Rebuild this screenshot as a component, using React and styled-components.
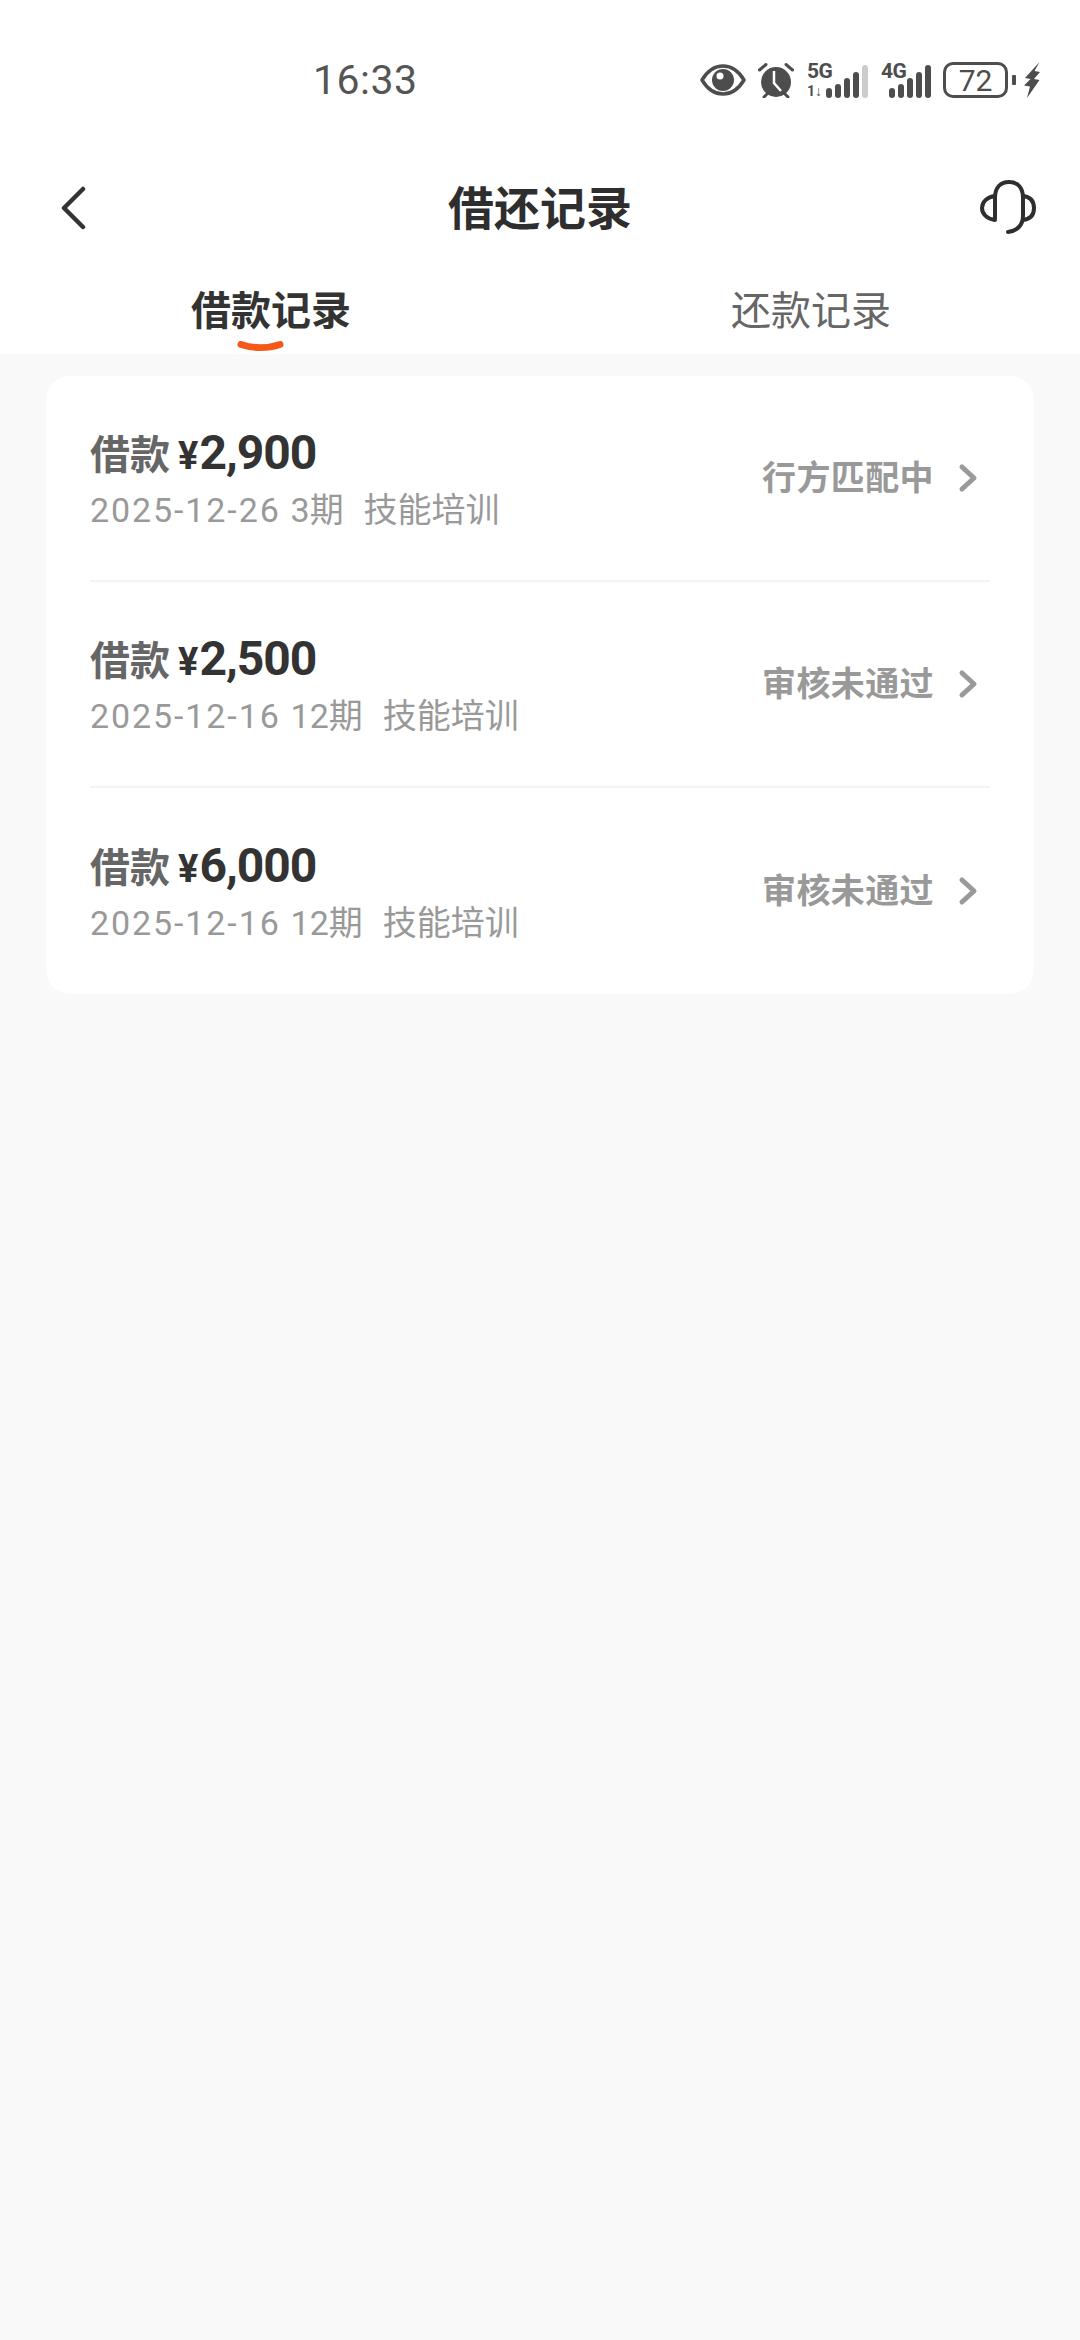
import React from 'react';
import styled, { createGlobalStyle } from 'styled-components';

const CJK = '"Noto Sans CJK SC", sans-serif';
const NUM = 'Roboto, "Noto Sans CJK SC", sans-serif';

const GlobalStyle = createGlobalStyle`
  html, body {
    margin: 0;
    padding: 0;
    background: #f9f9f9;
  }
  * {
    box-sizing: border-box;
  }
`;

const Page = styled.div`
  width: 1080px;
  height: 2340px;
  background: #f9f9f9;
  font-family: ${CJK};
`;

const Top = styled.header`
  background: #fff;
  height: 354px;
`;

const StatusBar = styled.div`
  height: 160px;
  display: flex;
  align-items: center;
  padding: 0 40px 0 313px;
  color: #4d4d4d;
`;

const Time = styled.span`
  font-family: Roboto, sans-serif;
  font-size: 41px;
  color: #555;
  letter-spacing: 0.5px;
`;

const StatusIcons = styled.div`
  margin-left: auto;
  display: flex;
  align-items: center;
`;

const Signal = styled.div`
  position: relative;
  width: ${p => p.$w}px;
  height: 36px;
  margin-left: ${p => p.$ml}px;
`;

const SignalText = styled.span`
  position: absolute;
  left: 0;
  top: -1px;
  font-family: Roboto, sans-serif;
  font-weight: 700;
  font-size: 21px;
  line-height: 21px;
  letter-spacing: -0.5px;
  color: #4d4d4d;
`;

const Arrows = styled.span`
  position: absolute;
  left: 0;
  bottom: 0;
  font-family: Roboto, sans-serif;
  font-weight: 700;
  font-size: 14px;
  line-height: 13px;
  color: #4d4d4d;
`;

const Bars = styled.div`
  position: absolute;
  right: 0;
  bottom: 0;
  display: flex;
  align-items: flex-end;
  gap: 3px;
`;

const Bar = styled.i`
  display: block;
  width: 6px;
  height: ${p => p.$h}px;
  border-radius: 3px;
  background: ${p => (p.$off ? '#ccc' : '#4d4d4d')};
`;

const Battery = styled.div`
  width: 65px;
  height: 36px;
  margin-left: 12px;
  border: 3px solid #4d4d4d;
  border-radius: 10px;
  display: flex;
  align-items: center;
  justify-content: center;
  font-family: Roboto, sans-serif;
  font-size: 30px;
  color: #4d4d4d;
`;

const BatteryNub = styled.i`
  display: block;
  width: 4px;
  height: 10px;
  margin-left: 4px;
  border-radius: 1px;
  background: #4d4d4d;
`;

const Nav = styled.div`
  height: 96px;
  display: grid;
  grid-template-columns: 1fr auto 1fr;
  align-items: center;
  padding: 0 44px;
`;

const NavEnd = styled.div`
  display: flex;
  justify-content: ${p => (p.$right ? 'flex-end' : 'flex-start')};
`;

const BackSvg = styled.svg`
  margin-left: 16px;
`;

const Title = styled.h1`
  margin: 0 0 6px;
  font-size: 46px;
  line-height: 64px;
  font-weight: 700;
  color: #2e2e2e;
`;

const Tabs = styled.div`
  height: 98px;
  display: grid;
  grid-template-columns: 542px 538px;
`;

const Tab = styled.div`
  position: relative;
  display: flex;
  justify-content: center;
  padding-top: 23px;
  font-size: 40px;
  line-height: 58px;
  font-weight: ${p => (p.$active ? 700 : 400)};
  color: ${p => (p.$active ? '#333' : '#666')};
`;

const TabMark = styled.svg`
  position: absolute;
  left: 237px;
  bottom: 0;
`;

const Card = styled.section`
  margin: 22px 46px 0;
  padding: 0 44px;
  background: #fff;
  border-radius: 24px;
`;

const Row = styled.div`
  height: 206px;
  display: flex;
  align-items: center;
  justify-content: space-between;
  border-bottom: ${p => (p.$last ? 'none' : '2px solid #f3f3f3')};
`;

const RowText = styled.div`
  display: flex;
  flex-direction: column;
`;

const Heading = styled.div`
  display: flex;
  align-items: baseline;
  height: 60px;
  line-height: 60px;
`;

const Label = styled.span`
  font-size: 40px;
  font-weight: 700;
  color: #666;
`;

const Amount = styled.span`
  margin-left: 8px;
  font-family: ${NUM};
  font-size: 48px;
  font-weight: 700;
  color: #333;
  letter-spacing: -1px;
`;

const Yen = styled.span`
  font-size: 38px;
  margin-right: 2px;
`;

const Meta = styled.div`
  margin-top: 4px;
  font-family: ${NUM};
  font-size: 34px;
  line-height: 48px;
  color: #999;
  white-space: pre;
  word-spacing: 1.5px;
`;

const MetaDate = styled.span`
  letter-spacing: 1.9px;
`;

const Side = styled.div`
  display: flex;
  align-items: center;
  padding-right: 12px;
`;

const Status = styled.span`
  margin-bottom: 6px;
  font-size: 34px;
  font-weight: 700;
  letter-spacing: 0.4px;
  color: #999;
`;

const Chevron = styled.svg`
  margin-left: 24px;
`;

const records = [
  { amount: '2,900', date: '2025-12-26', term: '3期  技能培训', status: '行方匹配中' },
  { amount: '2,500', date: '2025-12-16', term: '12期  技能培训', status: '审核未通过' },
  { amount: '6,000', date: '2025-12-16', term: '12期  技能培训', status: '审核未通过' },
];

function EyeIcon() {
  return (
    <svg width="46" height="32" viewBox="0 0 46 32">
      <path d="M2 16C8 6 15 2 23 2s15 4 21 14c-6 10-13 14-21 14S8 26 2 16z" fill="none" stroke="#4d4d4d" strokeWidth="3.5" strokeLinejoin="round" />
      <circle cx="23" cy="16" r="11" fill="#4d4d4d" />
      <circle cx="20" cy="12" r="3.5" fill="#fff" />
    </svg>
  );
}

function AlarmIcon() {
  return (
    <svg width="36" height="36" viewBox="0 0 36 36" style={{ marginLeft: 12 }}>
      <circle cx="18" cy="20" r="15" fill="#4d4d4d" />
      <path d="M1.5 8L8 2.5M34.5 8L28 2.5M9 32l-3 3M27 32l3 3" stroke="#4d4d4d" strokeWidth="3" strokeLinecap="round" />
      <path d="M16 9v12l7 8" fill="none" stroke="#fff" strokeWidth="2.5" />
    </svg>
  );
}

function BoltIcon() {
  return (
    <svg width="16" height="36" viewBox="0 0 16 36" style={{ marginLeft: 8 }}>
      <path d="M15.5 0L1 16l5.5 1L0 23.5l6 1L3 36l12.5-18-5.5-1 6-7-5.5-1z" fill="#4d4d4d" />
    </svg>
  );
}

function BackIcon() {
  return (
    <BackSvg width="28" height="44" viewBox="0 0 28 44" fill="none" stroke="#333" strokeWidth="4.5" strokeLinecap="round" strokeLinejoin="round">
      <path d="M23 3L4 22l19 19" />
    </BackSvg>
  );
}

function HeadsetIcon() {
  return (
    <svg width="56" height="56" viewBox="0 0 56 56" fill="none" stroke="#2e2e2e" strokeWidth="4" strokeLinecap="round">
      <path d="M15 38V18C15 8 20 2 29 2s14 6 14 16v18c0 9-6 15-15 16" />
      <path d="M15 16C7 17 2 22 2 28s5 11 13 12" />
      <path d="M43 16c8 1 11 6 11 12s-3 11-11 12" />
    </svg>
  );
}

function ChevronRight() {
  return (
    <Chevron width="20" height="30" viewBox="0 0 20 30" fill="none" stroke="#999" strokeWidth="5" strokeLinecap="round" strokeLinejoin="round">
      <path d="M4 4l12 11L4 26" />
    </Chevron>
  );
}

function SignalGroup({ name, w, ml, heights, offLast, arrows }) {
  return (
    <Signal $w={w} $ml={ml}>
      <SignalText>{name}</SignalText>
      {arrows && <Arrows>1↓</Arrows>}
      <Bars>
        {heights.map((h, i) => (
          <Bar key={i} $h={h} $off={offLast && i === heights.length - 1} />
        ))}
      </Bars>
    </Signal>
  );
}

export default function App() {
  return (
    <Page>
      <GlobalStyle />
      <Top>
        <StatusBar>
          <Time>16:33</Time>
          <StatusIcons>
            <EyeIcon />
            <AlarmIcon />
            <SignalGroup name="5G" w={61} ml={13} heights={[10, 14, 20, 26, 33]} offLast arrows />
            <SignalGroup name="4G" w={50} ml={13} heights={[10, 14, 20, 26, 33]} />
            <Battery>72</Battery>
            <BatteryNub />
            <BoltIcon />
          </StatusIcons>
        </StatusBar>
        <Nav>
          <NavEnd>
            <BackIcon />
          </NavEnd>
          <Title>借还记录</Title>
          <NavEnd $right>
            <HeadsetIcon />
          </NavEnd>
        </Nav>
        <Tabs>
          <Tab $active>
            借款记录
            <TabMark width="47" height="13" viewBox="0 0 47 13">
              <path d="M4 3.5c12 4 27 4 39 0" fill="none" stroke="#f5591a" strokeWidth="7" strokeLinecap="round" />
            </TabMark>
          </Tab>
          <Tab>还款记录</Tab>
        </Tabs>
      </Top>
      <Card>
        {records.map((r, i) => (
          <Row key={i} $last={i === records.length - 1}>
            <RowText>
              <Heading>
                <Label>借款</Label>
                <Amount>
                  <Yen>¥</Yen>
                  {r.amount}
                </Amount>
              </Heading>
              <Meta>
                <MetaDate>{r.date}</MetaDate> {r.term}
              </Meta>
            </RowText>
            <Side>
              <Status>{r.status}</Status>
              <ChevronRight />
            </Side>
          </Row>
        ))}
      </Card>
    </Page>
  );
}
